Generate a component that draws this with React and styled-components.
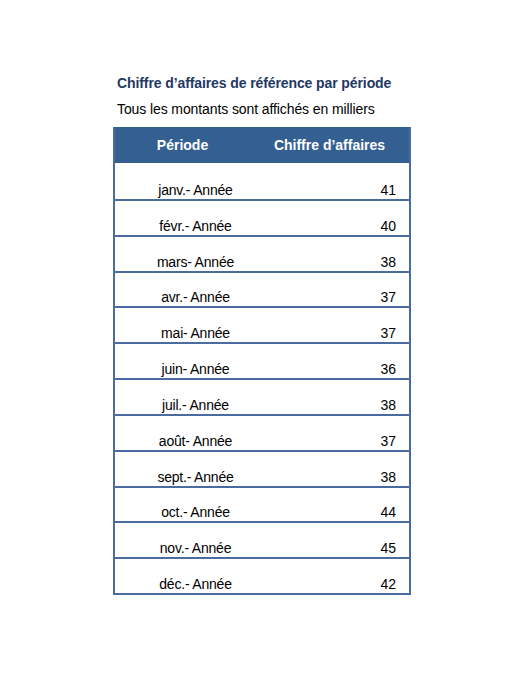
import React from 'react'
import styled, { createGlobalStyle } from 'styled-components'

const GlobalStyle = createGlobalStyle`
  body {
    margin: 0;
    background: #fff;
    font-family: "Liberation Sans", Arial, sans-serif;
  }
`

const Page = styled.div`
  width: 520px;
  height: 675px;
  padding: 75px 0 0 113px;
  box-sizing: border-box;
`

const Title = styled.h3`
  margin: 0;
  font-size: 14px;
  font-weight: bold;
  color: #1f3864;
  padding-left: 4px;
  line-height: 17px;
  letter-spacing: -0.1px;
`

const Subtitle = styled.p`
  margin: 9px 0 0;
  font-size: 14px;
  color: #000;
  padding-left: 4px;
  line-height: 17px;
  letter-spacing: -0.1px;
`

const Table = styled.div`
  margin-top: 9px;
  width: 298px;
  border: 2px solid #4a6ca0;
  border-top: 0;
  box-sizing: border-box;
`

const HeaderRow = styled.div`
  display: grid;
  grid-template-columns: 135px 1fr;
  height: 36px;
  align-items: center;
  background: #345f91;
  color: #fff;
  font-weight: bold;
  font-size: 14px;
`

const HeadCell = styled.div`
  text-align: center;
`

const Row = styled.div`
  display: grid;
  grid-template-columns: 161px 1fr;
  height: 35.85px;
  align-items: end;
  border-top: ${(p) => (p.$first ? '0' : '2px solid #4a6ca0')};
  box-sizing: border-box;
  font-size: 14px;
  color: #000;
  padding-bottom: 1px;
`

const Label = styled.div`
  text-align: center;
  letter-spacing: -0.2px;
`

const Amount = styled.div`
  text-align: right;
  padding-right: 13px;
`

const data = [
  ['janv.', 41],
  ['févr.', 40],
  ['mars', 38],
  ['avr.', 37],
  ['mai', 37],
  ['juin', 36],
  ['juil.', 38],
  ['août', 37],
  ['sept.', 38],
  ['oct.', 44],
  ['nov.', 45],
  ['déc.', 42],
]

const App = () => {
  return (
    <Page>
      <GlobalStyle />
      <Title>Chiffre d’affaires de référence par période</Title>
      <Subtitle>Tous les montants sont affichés en milliers</Subtitle>
      <Table>
        <HeaderRow>
          <HeadCell>Période</HeadCell>
          <HeadCell>Chiffre d’affaires</HeadCell>
        </HeaderRow>
        {data.map(([month, value], i) => (
          <Row key={month} $first={i === 0}>
            <Label>{month}- Année</Label>
            <Amount>{value}</Amount>
          </Row>
        ))}
      </Table>
    </Page>
  )
}

export default App
